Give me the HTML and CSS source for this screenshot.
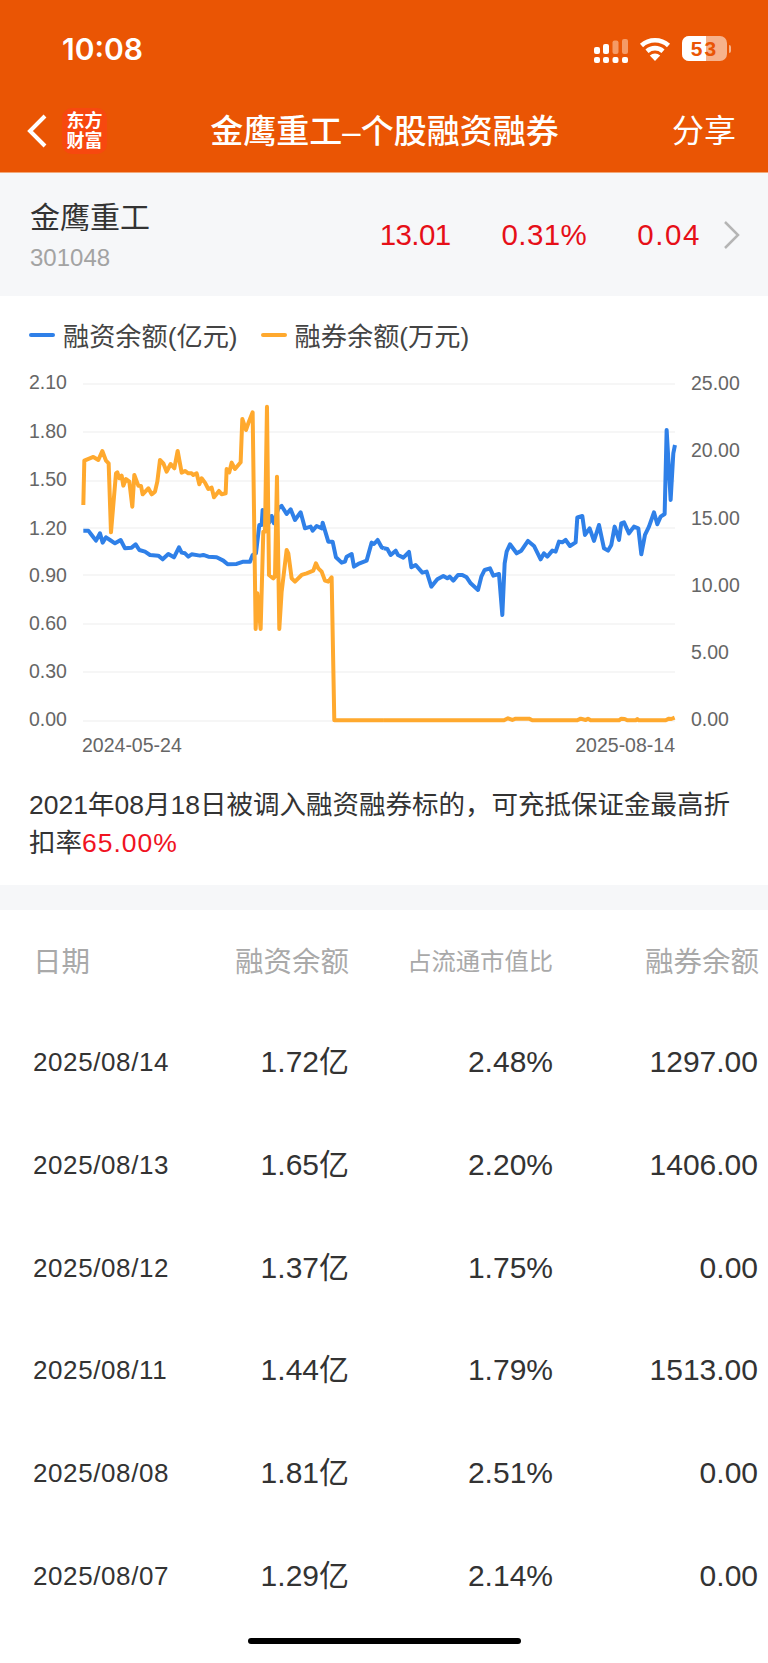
FILE: index.html
```html
<!DOCTYPE html>
<html lang="en">
<head>
  <meta charset="UTF-8">
  <title>金鹰重工-个股融资融券</title>
  <link rel="stylesheet" href="styles.css">
</head>
<body>
  <div class="page">
    <div class="topbar">
      <div class="status">
        <span class="time">10:08</span>
        <div class="status-icons">
          <svg class="signal" width="34" height="25" viewBox="0 0 34 25">
            <rect class="on" x="0" y="9" width="6" height="7" rx="2"/>
            <rect class="on" x="9" y="6" width="6" height="10" rx="2"/>
            <rect class="off" x="18.5" y="2.5" width="6" height="13.5" rx="2"/>
            <rect class="off" x="28" y="1" width="6" height="15" rx="2"/>
            <rect class="on" x="0" y="19" width="6" height="6" rx="2"/>
            <rect class="on" x="9" y="19" width="6" height="6" rx="2"/>
            <rect class="on" x="18.5" y="19" width="6" height="6" rx="2"/>
            <rect class="on" x="28" y="19" width="6" height="6" rx="2"/>
          </svg>
          <svg class="wifi" width="32" height="24" viewBox="0 0 32 24">
            <path d="M2.5 8.5 A20 20 0 0 1 29.5 8.5"/>
            <path d="M8 14.2 A12 12 0 0 1 24 14.2"/>
            <path class="wedge" d="M16 24 L10.8 18.4 A8 8 0 0 1 21.2 18.4 Z"/>
          </svg>
          <div class="battery">
            <div class="battery-body">
              <div class="battery-fill"></div>
              <span class="battery-num">53</span>
            </div>
            <div class="battery-cap"></div>
          </div>
        </div>
      </div>
      <div class="navbar">
        <svg class="back" width="20" height="34" viewBox="0 0 20 34">
          <path d="M18 2 L3 17 L18 32"/>
        </svg>
        <div class="logo">东方<br>财富</div>
        <h1 class="title">金鹰重工–个股融资融券</h1>
        <a class="share">分享</a>
      </div>
    </div>

    <div class="stock">
      <div class="stock-name">
        <div class="name">金鹰重工</div>
        <div class="code">301048</div>
      </div>
      <div class="stock-nums">
        <span class="num-price">13.01</span>
        <span class="num-pct">0.31%</span>
        <span class="num-chg">0.04</span>
      </div>
      <svg class="more" width="17" height="30" viewBox="0 0 17 30">
        <path d="M2 2 L15 15 L2 28"/>
      </svg>
    </div>

    <div class="chart-box">
      <div class="legend">
        <i class="key key-blue"></i><span class="legend-a">融资余额(亿元)</span>
        <i class="key key-orange"></i><span>融券余额(万元)</span>
      </div>
      <!-- viewBox uses page coordinates, the line groups are traced at 3x -->
      <svg class="chart" width="768" height="410" viewBox="0 360 768 410">
        <g class="grid">
          <line x1="83" x2="675" y1="384" y2="384"/>
          <line x1="83" x2="675" y1="432" y2="432"/>
          <line x1="83" x2="675" y1="481" y2="481"/>
          <line x1="83" x2="675" y1="528" y2="528"/>
          <line x1="83" x2="675" y1="575" y2="575"/>
          <line x1="83" x2="675" y1="624" y2="624"/>
          <line x1="83" x2="675" y1="672" y2="672"/>
          <line x1="83" x2="675" y1="721" y2="721"/>
        </g>
        <g class="axis">
          <text x="29" y="389">2.10</text>
          <text x="29" y="438">1.80</text>
          <text x="29" y="486">1.50</text>
          <text x="29" y="535">1.20</text>
          <text x="29" y="582">0.90</text>
          <text x="29" y="630">0.60</text>
          <text x="29" y="678">0.30</text>
          <text x="29" y="726">0.00</text>
          <text x="691" y="390">25.00</text>
          <text x="691" y="457">20.00</text>
          <text x="691" y="525">15.00</text>
          <text x="691" y="592">10.00</text>
          <text x="691" y="659">5.00</text>
          <text x="691" y="726">0.00</text>
          <text x="82" y="752">2024-05-24</text>
          <text class="end" x="675" y="752">2025-08-14</text>
        </g>
        <g class="line-blue">
          <polyline transform="translate(0 310) scale(.3333)" points="250,662 265,662 275,675 288,692 300,670 308,698 318,682 330,690 345,700 362,690 375,715 395,713 407,703 418,720 435,725 450,735 475,737 488,748 505,732 522,742 537,712 545,728 555,730 565,740 575,733 600,737 610,735 625,740 650,742 670,752 683,763 710,762 730,755 750,755 758,735 768,730 778,645 785,645 788,600 798,640 808,638 815,618 822,640 835,595 845,588 860,612 872,598 885,630 902,607 915,655 932,650 938,662 950,648 966,655 968,638 985,695 998,695 1008,742 1025,758 1035,755 1040,740 1055,732 1062,770 1075,762 1100,752 1115,698 1122,702 1133,690 1145,712 1152,715"/>
          <polyline transform="translate(384 310) scale(.3333)" points="0,715 10,717 20,735 35,722 42,735 58,743 75,726 82,772 95,765 115,788 128,785 142,830 160,808 178,798 190,805 197,800 208,812 222,795 235,795 248,802 260,820 282,840 292,800 302,780 318,775 328,797 345,792 355,915 362,760 368,725 378,703 398,730 412,722 432,693 450,708 470,748 480,730 490,740 505,722 515,725 525,695 535,697 545,690 558,708 575,697 580,622 595,618 603,675 617,655 630,693 645,645 660,715 672,722 682,705 692,650 705,690 712,640 720,637 735,670 750,650 763,655 772,733 783,675 795,650 810,607 820,643 830,620 842,612 848,360 860,570 868,430 873,405"/>
        </g>
        <g class="line-orange">
          <polyline transform="translate(0 310) scale(.3333)" points="250,585 253,452 262,448 280,441 295,450 307,423 318,452 326,460 333,667 348,490 352,487 358,505 365,497 370,527 378,507 388,515 397,590 403,495 415,527 423,528 428,553 445,535 455,553 465,545 472,515 480,450 490,460 500,485 512,462 523,475 533,423 545,488 555,483 565,490 575,490 580,495 590,490 598,523 605,505 615,518 625,537 635,533 642,562 657,543 665,553 677,550 680,477 688,487 695,458 705,477 722,457 727,327 738,360 745,340 758,307 767,957 772,850 782,957 790,665 795,665 801,290 807,795 820,805 825,800 831,500 838,957 845,845 860,720 865,730 875,805 885,815 905,795 920,790 940,782 948,760 955,775 965,785 975,812 985,815 995,802 1003,1231 1152,1231"/>
          <polyline transform="translate(384 580) scale(.3333)" points="0,421 360,421 372,415 385,420 395,416 435,416 445,421 580,421 590,416 605,420 612,416 620,421 705,421 712,416 722,417 730,421 755,421 760,417 765,421 845,421 855,416 862,417 872,413"/>
        </g>
      </svg>
      <p class="note">2021年08月18日被调入融资融券标的，可充抵保证金最高折扣率<span class="red">65.00%</span></p>
    </div>

    <div class="gap"></div>

    <div class="table">
      <div class="row head">
        <div class="col-date">日期</div>
        <div>融资余额</div>
        <div class="small">占流通市值比</div>
        <div class="last">融券余额</div>
      </div>
      <div class="row">
        <div class="col-date">2025/08/14</div><div>1.72亿</div><div>2.48%</div><div>1297.00</div>
      </div>
      <div class="row">
        <div class="col-date">2025/08/13</div><div>1.65亿</div><div>2.20%</div><div>1406.00</div>
      </div>
      <div class="row">
        <div class="col-date">2025/08/12</div><div>1.37亿</div><div>1.75%</div><div>0.00</div>
      </div>
      <div class="row">
        <div class="col-date">2025/08/11</div><div>1.44亿</div><div>1.79%</div><div>1513.00</div>
      </div>
      <div class="row">
        <div class="col-date">2025/08/08</div><div>1.81亿</div><div>2.51%</div><div>0.00</div>
      </div>
      <div class="row">
        <div class="col-date">2025/08/07</div><div>1.29亿</div><div>2.14%</div><div>0.00</div>
      </div>
    </div>

    <div class="home-bar"></div>
  </div>
</body>
</html>
```

FILE: styles.css
```css
* {
  margin: 0;
  padding: 0;
  box-sizing: border-box;
}

body {
  background: #fff;
  font-family: "Liberation Sans", "Noto Sans CJK SC", sans-serif;
  color: #333;
}

.page {
  position: relative;
  width: 768px;
  height: 1663px;
  overflow: hidden;
}

/* Orange header */
.topbar {
  height: 173px;
  background-color: #ea5504;
  color: white;
  border-bottom: 1px solid #f3a878;
}

.status {
  height: 96px;
  padding: 1px 37px 0 62px;
  display: flex;
  align-items: center;
  justify-content: space-between;
}

.time {
  font-family: Inter, sans-serif;
  font-size: 30px;
  font-weight: 600;
}

.status-icons {
  display: flex;
  align-items: center;
}

.signal {
  margin-top: 3px;
  margin-right: 11px;
}

.signal .on {
  fill: white;
}

.signal .off {
  fill: #f59a66;
}

.wifi {
  margin-right: 11px;
}

.wifi path {
  fill: none;
  stroke: white;
  stroke-width: 4.6;
}

.wifi .wedge {
  fill: white;
  stroke: none;
}

.battery {
  display: flex;
  align-items: center;
}

.battery-body {
  position: relative;
  width: 45px;
  height: 25px;
  border-radius: 7px;
  background: #f6b28c;
  overflow: hidden;
}

.battery-fill {
  width: 24px;
  height: 100%;
  background: white;
}

.battery-num {
  position: absolute;
  top: 0;
  left: 0;
  width: 100%;
  text-align: center;
  font-size: 21px;
  font-weight: bold;
  line-height: 25px;
  letter-spacing: 2px;
  color: #ea5504;
}

.battery-cap {
  width: 2px;
  height: 8px;
  margin-left: 2px;
  border-radius: 0 2px 2px 0;
  background: #f6b28c;
}

.navbar {
  height: 76px;
  padding: 0 32px 6px 27px;
  display: flex;
  align-items: center;
}

.back path {
  fill: none;
  stroke: white;
  stroke-width: 4;
}

.more path {
  fill: none;
  stroke: #b5b5b5;
  stroke-width: 2.5;
}

.logo {
  width: 45px;
  height: 46px;
  margin-left: 15px;
  border-radius: 10px;
  background: #f7480f;
  font-size: 18px;
  font-weight: bold;
  line-height: 20px;
  text-align: center;
  padding-top: 3px;
}

.title {
  flex: 1;
  text-align: center;
  margin-right: 10px;
  margin-bottom: 5px;
  font-size: 33px;
  font-weight: 500;
  white-space: nowrap;
}

.share {
  font-size: 32px;
  margin-bottom: 6px;
}

/* Stock summary */
.stock {
  height: 123px;
  padding: 0 28px 0 30px;
  background: #f6f7f9;
  display: flex;
  align-items: center;
}

.stock-name {
  flex: 1;
  padding-top: 5px;
}

.name {
  font-size: 30px;
  line-height: 40px;
}

.code {
  margin-top: 2px;
  font-size: 24px;
  line-height: 36px;
  color: #a3a3a3;
}

.stock-nums {
  display: flex;
  font-size: 29.5px;
  color: #e60f18;
}

.num-price {
  letter-spacing: -.6px;
}

.num-pct {
  margin-left: 51px;
  letter-spacing: .4px;
}

.num-chg {
  margin-left: 50px;
  letter-spacing: 1.6px;
}

.more {
  margin-left: 22px;
}

/* Chart */
.chart-box {
  height: 589px;
  padding-top: 22px;
}

.legend {
  height: 34px;
  margin-bottom: 8px;
  padding-left: 29px;
  display: flex;
  align-items: center;
  font-size: 26.2px;
  color: #444;
}

.key {
  display: block;
  width: 26px;
  height: 4px;
  margin-right: 8px;
  border-radius: 2px;
}

.key-blue {
  background: #2f80e8;
}

.key-orange {
  background: #ffa92e;
}

.legend-a {
  margin-right: 23px;
}

.chart {
  display: block;
}

.grid line {
  stroke: #f3f3f3;
  stroke-width: 1.5;
}

.axis text {
  font-size: 19.5px;
  fill: #666;
}

.axis .end {
  text-anchor: end;
}

.line-blue polyline,
.line-orange polyline {
  fill: none;
  stroke-width: 12;
  stroke-linejoin: round;
}

.line-blue polyline {
  stroke: #2f80e8;
}

.line-orange polyline {
  stroke: #ffa92e;
}

.note {
  margin-top: 16px;
  padding: 0 29px;
  font-size: 26.5px;
  line-height: 38px;
}

.red {
  color: #f0131f;
  letter-spacing: 1px;
}

.gap {
  height: 25px;
  background: #f6f7f9;
}

/* Table */
.row {
  height: 102.7px;
  padding-bottom: 2px;
  display: grid;
  grid-template-columns: 186px 163px 204px 205px;
  align-items: center;
  text-align: right;
  font-size: 30px;
  line-height: 36px;
}

.row .col-date {
  text-align: left;
  padding-left: 33px;
  font-size: 26px;
  letter-spacing: .6px;
}

.head {
  height: 102px;
  padding-bottom: 0;
  padding-top: 2px;
  font-size: 28.5px;
  color: #a9a9a9;
}

.head .col-date {
  font-size: 28.5px;
  padding-left: 33px;
  letter-spacing: 0;
}

.head .small {
  font-size: 24.3px;
}

.head .last {
  margin-right: -1px;
}

.home-bar {
  position: absolute;
  left: 248px;
  bottom: 19px;
  width: 273px;
  height: 6px;
  border-radius: 3px;
  background: #000;
}
```
